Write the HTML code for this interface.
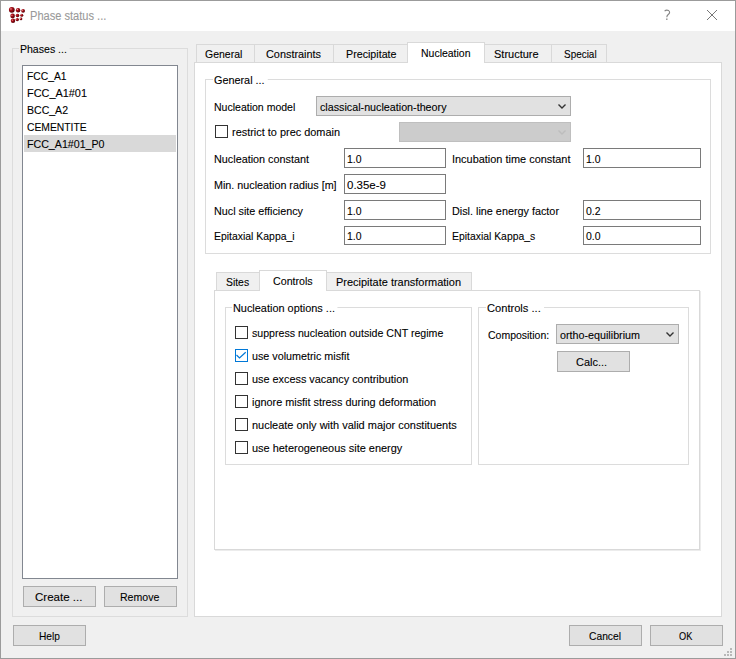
<!DOCTYPE html>
<html><head><meta charset="utf-8"><style>
html,body{margin:0;padding:0;width:736px;height:659px;overflow:hidden;background:#f0f0f0;}
.a{position:absolute;box-sizing:border-box;}
.t{position:absolute;white-space:pre;font-family:"Liberation Sans", sans-serif;transform-origin:0 0;-webkit-text-stroke:0.1px currentColor;}
</style></head><body>
<div class="a" style="left:0px;top:0px;width:736px;height:659px;background:#f0f0f0;box-shadow:inset 0 0 0 1px #9b9b9b;"></div>
<div class="a" style="left:1px;top:1px;width:734px;height:30px;background:#ffffff;"></div>
<svg class="a" style="left:0;top:0" width="40" height="31" viewBox="0 0 40 31">
<defs><radialGradient id="rg" cx="0.35" cy="0.35" r="0.7"><stop offset="0" stop-color="#f0a0a0"/><stop offset="0.3" stop-color="#b0101a"/><stop offset="1" stop-color="#4a0006"/></radialGradient></defs>
<g fill="url(#rg)">
<circle cx="11.8" cy="9.8" r="2.9"/><circle cx="18.1" cy="10.2" r="2.2"/><circle cx="23.1" cy="10.8" r="1.9"/>
<circle cx="12.6" cy="15.9" r="2.3"/><circle cx="17.5" cy="15.5" r="1.8"/><circle cx="21.8" cy="15.3" r="1.5"/>
<circle cx="13" cy="20.8" r="2.2"/><circle cx="17.3" cy="19.6" r="1.7"/><circle cx="21" cy="18.9" r="1.3"/>
</g></svg>
<div class="t" style="left:30.40px;top:8.67px;font-size:12.5px;line-height:14px;color:#999999;transform:scaleX(0.8854);">Phase status ...</div>
<svg class="a" style="left:0;top:0" width="736" height="31"><path d="M664.6 11.2C665.5 10.3 667.4 10 668.6 10.6C670 11.5 669.9 13.2 668.5 14.2C667.3 15.1 666.8 15.6 666.8 17.2" stroke="#858585" stroke-width="1.1" fill="none"/><rect x="666.1" y="18.5" width="1.4" height="1.4" fill="#858585"/></svg>
<svg class="a" style="left:706px;top:9px" width="12" height="12" viewBox="0 0 12 12"><path d="M1 1L11 11M11 1L1 11" stroke="#777" stroke-width="1" fill="none"/></svg>
<div class="a" style="left:12px;top:48px;width:176px;height:569px;box-shadow:inset 0 0 0 1px #dcdcdc;"></div>
<div class="t" style="left:20.40px;top:42.02px;font-size:11.5px;line-height:14px;color:#000;transform:scaleX(0.9190);background:#f0f0f0;padding:0 3px 0 1px;margin-left:-1px;">Phases ...</div>
<div class="a" style="left:22px;top:65px;width:156px;height:514px;background:#ffffff;box-shadow:inset 0 0 0 1px #828790;"></div>
<div class="a" style="left:24px;top:135px;width:152px;height:17px;background:#d9d9d9;"></div>
<div class="t" style="left:27.40px;top:69.02px;font-size:11.5px;line-height:14px;color:#000;transform:scaleX(0.8955);">FCC_A1</div>
<div class="t" style="left:27.40px;top:86.02px;font-size:11.5px;line-height:14px;color:#000;transform:scaleX(0.9479);">FCC_A1#01</div>
<div class="t" style="left:27.40px;top:103.02px;font-size:11.5px;line-height:14px;color:#000;transform:scaleX(0.9162);">BCC_A2</div>
<div class="t" style="left:27.40px;top:120.02px;font-size:11.5px;line-height:14px;color:#000;transform:scaleX(0.8984);">CEMENTITE</div>
<div class="t" style="left:27.40px;top:137.02px;font-size:11.5px;line-height:14px;color:#000;transform:scaleX(0.9254);">FCC_A1#01_P0</div>
<div class="a" style="left:23px;top:586px;width:73px;height:21px;background:#e1e1e1;box-shadow:inset 0 0 0 1px #adadad;"></div>
<div class="t" style="left:34.60px;top:590.02px;font-size:11.5px;line-height:14px;color:#000;transform:scaleX(1.0018);">Create ...</div>
<div class="a" style="left:104px;top:586px;width:73px;height:21px;background:#e1e1e1;box-shadow:inset 0 0 0 1px #adadad;"></div>
<div class="t" style="left:120.00px;top:590.02px;font-size:11.5px;line-height:14px;color:#000;transform:scaleX(0.9176);">Remove</div>
<div class="a" style="left:13px;top:625px;width:73px;height:21px;background:#e1e1e1;box-shadow:inset 0 0 0 1px #adadad;"></div>
<div class="t" style="left:38.50px;top:629.02px;font-size:11.5px;line-height:14px;color:#000;transform:scaleX(0.8835);">Help</div>
<div class="a" style="left:569px;top:625px;width:73px;height:21px;background:#e1e1e1;box-shadow:inset 0 0 0 1px #adadad;"></div>
<div class="t" style="left:588.50px;top:629.02px;font-size:11.5px;line-height:14px;color:#000;transform:scaleX(0.8935);">Cancel</div>
<div class="a" style="left:650px;top:625px;width:73px;height:21px;background:#e1e1e1;box-shadow:inset 0 0 0 1px #adadad;"></div>
<div class="t" style="left:679.00px;top:629.02px;font-size:11.5px;line-height:14px;color:#000;transform:scaleX(0.8000);">OK</div>
<div class="a" style="left:194px;top:62px;width:528px;height:555px;background:#ffffff;box-shadow:inset 0 0 0 1px #d9d9d9;"></div>
<div class="a" style="left:196px;top:44px;width:59px;height:19px;background:#f0f0f0;box-shadow:inset 0 0 0 1px #d9d9d9;"></div>
<div class="t" style="left:205.40px;top:47.02px;font-size:11.5px;line-height:14px;color:#000;transform:scaleX(0.9115);">General</div>
<div class="a" style="left:254px;top:44px;width:80px;height:19px;background:#f0f0f0;box-shadow:inset 0 0 0 1px #d9d9d9;"></div>
<div class="t" style="left:266.40px;top:47.02px;font-size:11.5px;line-height:14px;color:#000;transform:scaleX(0.9455);">Constraints</div>
<div class="a" style="left:333px;top:44px;width:75px;height:19px;background:#f0f0f0;box-shadow:inset 0 0 0 1px #d9d9d9;"></div>
<div class="t" style="left:345.50px;top:47.02px;font-size:11.5px;line-height:14px;color:#000;transform:scaleX(0.9293);">Precipitate</div>
<div class="a" style="left:484px;top:44px;width:68px;height:19px;background:#f0f0f0;box-shadow:inset 0 0 0 1px #d9d9d9;"></div>
<div class="t" style="left:494.30px;top:47.02px;font-size:11.5px;line-height:14px;color:#000;transform:scaleX(0.9556);">Structure</div>
<div class="a" style="left:551px;top:44px;width:56px;height:19px;background:#f0f0f0;box-shadow:inset 0 0 0 1px #d9d9d9;"></div>
<div class="t" style="left:563.70px;top:47.02px;font-size:11.5px;line-height:14px;color:#000;transform:scaleX(0.8643);">Special</div>
<div class="a" style="left:407px;top:42px;width:78px;height:21px;background:#ffffff;box-shadow:inset 0 0 0 1px #d9d9d9;"></div>
<div class="a" style="left:408px;top:62px;width:76px;height:1px;background:#ffffff;"></div>
<div class="t" style="left:420.80px;top:46.02px;font-size:11.5px;line-height:14px;color:#000;transform:scaleX(0.9109);">Nucleation</div>
<div class="a" style="left:205px;top:79px;width:506px;height:175px;box-shadow:inset 0 0 0 1px #dcdcdc;"></div>
<div class="t" style="left:213.90px;top:73.02px;font-size:11.5px;line-height:14px;color:#000;transform:scaleX(0.9441);background:#ffffff;padding:0 3px 0 1px;margin-left:-1px;">General ...</div>
<div class="t" style="left:214.10px;top:100.02px;font-size:11.5px;line-height:14px;color:#000;transform:scaleX(0.9149);">Nucleation model</div>
<div class="a" style="left:316px;top:96px;width:255px;height:20px;background:#e1e1e1;box-shadow:inset 0 0 0 1px #adadad;"></div>
<svg class="a" style="left:556px;top:102.1px" width="12" height="8" viewBox="0 0 12 8"><path d="M2.5 2.5L6 6L9.5 2.5" stroke="#333333" stroke-width="1.4" fill="none"/></svg>
<div class="t" style="left:319.50px;top:100.02px;font-size:11.5px;line-height:14px;color:#000;transform:scaleX(0.9335);">classical-nucleation-theory</div>
<div class="a" style="left:215px;top:125px;width:13px;height:13px;background:#ffffff;box-shadow:inset 0 0 0 1px #333333;"></div>
<div class="t" style="left:232.30px;top:125.02px;font-size:11.5px;line-height:14px;color:#000;transform:scaleX(0.9493);">restrict to prec domain</div>
<div class="a" style="left:399px;top:122px;width:172px;height:20px;background:#cccccc;box-shadow:inset 0 0 0 1px #bfbfbf;"></div>
<svg class="a" style="left:556px;top:128.1px" width="12" height="8" viewBox="0 0 12 8"><path d="M2.5 2.5L6 6L9.5 2.5" stroke="#bdbdbd" stroke-width="1.4" fill="none"/></svg>
<div class="t" style="left:214.30px;top:152.02px;font-size:11.5px;line-height:14px;color:#000;transform:scaleX(0.9404);">Nucleation constant</div>
<div class="a" style="left:344px;top:148px;width:102px;height:20px;background:#ffffff;box-shadow:inset 0 0 0 1px #7a7a7a;"></div>
<div class="t" style="left:347.40px;top:152.02px;font-size:11.5px;line-height:14px;color:#000;transform:scaleX(0.9080);">1.0</div>
<div class="t" style="left:452.00px;top:152.02px;font-size:11.5px;line-height:14px;color:#000;transform:scaleX(0.9505);">Incubation time constant</div>
<div class="a" style="left:583px;top:148px;width:118px;height:20px;background:#ffffff;box-shadow:inset 0 0 0 1px #7a7a7a;"></div>
<div class="t" style="left:586.40px;top:152.02px;font-size:11.5px;line-height:14px;color:#000;transform:scaleX(0.9080);">1.0</div>
<div class="t" style="left:214.30px;top:178.02px;font-size:11.5px;line-height:14px;color:#000;transform:scaleX(0.9355);">Min. nucleation radius [m]</div>
<div class="a" style="left:344px;top:174px;width:102px;height:20px;background:#ffffff;box-shadow:inset 0 0 0 1px #7a7a7a;"></div>
<div class="t" style="left:347.40px;top:178.02px;font-size:11.5px;line-height:14px;color:#000;transform:scaleX(0.9970);">0.35e-9</div>
<div class="t" style="left:214.30px;top:204.02px;font-size:11.5px;line-height:14px;color:#000;transform:scaleX(0.9365);">Nucl site efficiency</div>
<div class="a" style="left:344px;top:200px;width:102px;height:20px;background:#ffffff;box-shadow:inset 0 0 0 1px #7a7a7a;"></div>
<div class="t" style="left:347.40px;top:204.02px;font-size:11.5px;line-height:14px;color:#000;transform:scaleX(0.9080);">1.0</div>
<div class="t" style="left:452.00px;top:204.02px;font-size:11.5px;line-height:14px;color:#000;transform:scaleX(0.9404);">Disl. line energy factor</div>
<div class="a" style="left:583px;top:200px;width:118px;height:20px;background:#ffffff;box-shadow:inset 0 0 0 1px #7a7a7a;"></div>
<div class="t" style="left:586.40px;top:204.02px;font-size:11.5px;line-height:14px;color:#000;transform:scaleX(0.9080);">0.2</div>
<div class="t" style="left:214.30px;top:229.02px;font-size:11.5px;line-height:14px;color:#000;transform:scaleX(0.9069);">Epitaxial Kappa_i</div>
<div class="a" style="left:344px;top:226px;width:102px;height:19px;background:#ffffff;box-shadow:inset 0 0 0 1px #7a7a7a;"></div>
<div class="t" style="left:347.40px;top:229.02px;font-size:11.5px;line-height:14px;color:#000;transform:scaleX(0.9080);">1.0</div>
<div class="t" style="left:452.00px;top:229.02px;font-size:11.5px;line-height:14px;color:#000;transform:scaleX(0.9037);">Epitaxial Kappa_s</div>
<div class="a" style="left:583px;top:226px;width:118px;height:19px;background:#ffffff;box-shadow:inset 0 0 0 1px #7a7a7a;"></div>
<div class="t" style="left:586.40px;top:229.02px;font-size:11.5px;line-height:14px;color:#000;transform:scaleX(0.9080);">0.0</div>
<div class="a" style="left:214px;top:290px;width:486px;height:260px;background:#ffffff;box-shadow:inset 0 0 0 1px #d9d9d9;"></div>
<div class="a" style="left:700px;top:291px;width:1px;height:260px;background:#ececec;"></div>
<div class="a" style="left:215px;top:550px;width:486px;height:1px;background:#ececec;"></div>
<div class="a" style="left:216px;top:272px;width:44px;height:19px;background:#f0f0f0;box-shadow:inset 0 0 0 1px #d9d9d9;"></div>
<div class="t" style="left:225.50px;top:275.02px;font-size:11.5px;line-height:14px;color:#000;transform:scaleX(0.9031);">Sites</div>
<div class="a" style="left:326px;top:272px;width:146px;height:19px;background:#f0f0f0;box-shadow:inset 0 0 0 1px #d9d9d9;"></div>
<div class="t" style="left:336.40px;top:275.02px;font-size:11.5px;line-height:14px;color:#000;transform:scaleX(0.9539);">Precipitate transformation</div>
<div class="a" style="left:259px;top:270px;width:68px;height:21px;background:#ffffff;box-shadow:inset 0 0 0 1px #d9d9d9;"></div>
<div class="a" style="left:260px;top:290px;width:66px;height:1px;background:#ffffff;"></div>
<div class="t" style="left:272.60px;top:274.02px;font-size:11.5px;line-height:14px;color:#000;transform:scaleX(0.9270);">Controls</div>
<div class="a" style="left:225px;top:307px;width:247px;height:158px;box-shadow:inset 0 0 0 1px #dcdcdc;"></div>
<div class="t" style="left:233.30px;top:301.02px;font-size:11.5px;line-height:14px;color:#000;transform:scaleX(0.9497);background:#ffffff;padding:0 3px 0 1px;margin-left:-1px;">Nucleation options ...</div>
<div class="a" style="left:235px;top:326px;width:13px;height:13px;background:#ffffff;box-shadow:inset 0 0 0 1px #333333;"></div>
<div class="t" style="left:252.10px;top:326.02px;font-size:11.5px;line-height:14px;color:#000;transform:scaleX(0.9217);">suppress nucleation outside CNT regime</div>
<div class="a" style="left:235px;top:349px;width:13px;height:13px;background:#ffffff;box-shadow:inset 0 0 0 1px #0078d7;"></div>
<svg class="a" style="left:235px;top:349px" width="13" height="13" viewBox="0 0 13 13"><path d="M1.5 6L4.5 9L10.7 3.2" stroke="#0078d7" stroke-width="1.2" fill="none"/></svg>
<div class="t" style="left:252.10px;top:349.02px;font-size:11.5px;line-height:14px;color:#000;transform:scaleX(0.9350);">use volumetric misfit</div>
<div class="a" style="left:235px;top:372px;width:13px;height:13px;background:#ffffff;box-shadow:inset 0 0 0 1px #333333;"></div>
<div class="t" style="left:252.10px;top:372.02px;font-size:11.5px;line-height:14px;color:#000;transform:scaleX(0.9441);">use excess vacancy contribution</div>
<div class="a" style="left:235px;top:395px;width:13px;height:13px;background:#ffffff;box-shadow:inset 0 0 0 1px #333333;"></div>
<div class="t" style="left:252.10px;top:395.02px;font-size:11.5px;line-height:14px;color:#000;transform:scaleX(0.9438);">ignore misfit stress during deformation</div>
<div class="a" style="left:235px;top:418px;width:13px;height:13px;background:#ffffff;box-shadow:inset 0 0 0 1px #333333;"></div>
<div class="t" style="left:252.10px;top:418.02px;font-size:11.5px;line-height:14px;color:#000;transform:scaleX(0.9531);">nucleate only with valid major constituents</div>
<div class="a" style="left:235px;top:441px;width:13px;height:13px;background:#ffffff;box-shadow:inset 0 0 0 1px #333333;"></div>
<div class="t" style="left:252.10px;top:441.02px;font-size:11.5px;line-height:14px;color:#000;transform:scaleX(0.9517);">use heterogeneous site energy</div>
<div class="a" style="left:478px;top:307px;width:211px;height:158px;box-shadow:inset 0 0 0 1px #dcdcdc;"></div>
<div class="t" style="left:486.60px;top:301.02px;font-size:11.5px;line-height:14px;color:#000;transform:scaleX(0.9675);background:#ffffff;padding:0 3px 0 1px;margin-left:-1px;">Controls ...</div>
<div class="t" style="left:487.80px;top:328.02px;font-size:11.5px;line-height:14px;color:#000;transform:scaleX(0.9117);">Composition:</div>
<div class="a" style="left:556px;top:324px;width:123px;height:20px;background:#e1e1e1;box-shadow:inset 0 0 0 1px #adadad;"></div>
<svg class="a" style="left:664px;top:330.1px" width="12" height="8" viewBox="0 0 12 8"><path d="M2.5 2.5L6 6L9.5 2.5" stroke="#333333" stroke-width="1.4" fill="none"/></svg>
<div class="t" style="left:559.50px;top:328.02px;font-size:11.5px;line-height:14px;color:#000;transform:scaleX(0.9340);">ortho-equilibrium</div>
<div class="a" style="left:557px;top:351px;width:73px;height:21px;background:#e1e1e1;box-shadow:inset 0 0 0 1px #adadad;"></div>
<div class="t" style="left:576.30px;top:355.02px;font-size:11.5px;line-height:14px;color:#000;transform:scaleX(0.9542);">Calc...</div>
<div class="a" style="left:730px;top:648px;width:2px;height:2px;background:#b8b8b8;"></div>
<div class="a" style="left:727px;top:651px;width:2px;height:2px;background:#b8b8b8;"></div>
<div class="a" style="left:730px;top:651px;width:2px;height:2px;background:#b8b8b8;"></div>
<div class="a" style="left:724px;top:654px;width:2px;height:2px;background:#b8b8b8;"></div>
<div class="a" style="left:727px;top:654px;width:2px;height:2px;background:#b8b8b8;"></div>
<div class="a" style="left:730px;top:654px;width:2px;height:2px;background:#b8b8b8;"></div>
</body></html>
